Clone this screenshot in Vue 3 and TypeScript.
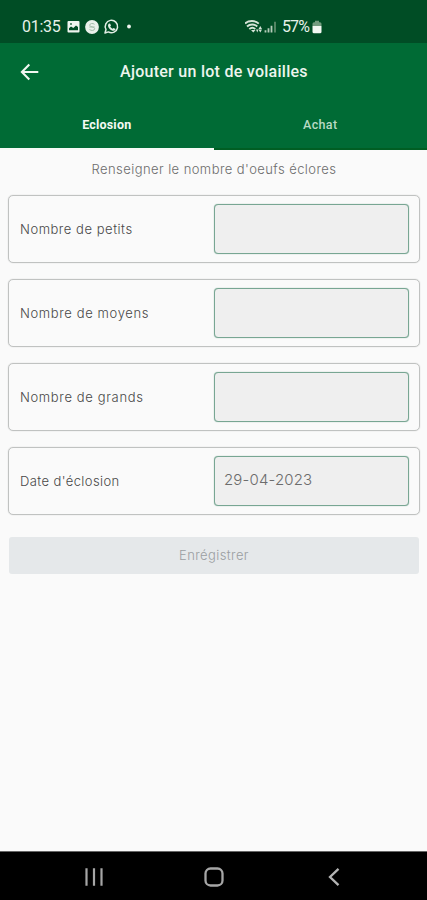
<script setup lang="ts">
import { ref } from 'vue'

interface Field {
  label: string
  value: string
  kind: string
}

const active = ref(0)
const tabs: string[] = ['Eclosion', 'Achat']
const fields = ref<Field[]>([
  { label: 'Nombre de petits', value: '', kind: 'petits' },
  { label: 'Nombre de moyens', value: '', kind: 'moyens' },
  { label: 'Nombre de grands', value: '', kind: 'grands' },
  { label: "Date d'éclosion", value: '29-04-2023', kind: 'date' },
])
</script>

<template>
  <div class="screen">
    <div class="status">
      <span class="time">01:35</span>
      <svg class="notifs" width="68" height="16" viewBox="0 0 68 16">
        <path fill="#eef5ee" fill-rule="evenodd" d="M1.500 2h10a1 1 0 0 1 1 1v9.500a1 1 0 0 1-1 1h-10a1 1 0 0 1-1-1V3a1 1 0 0 1 1-1zM2 11.300h9V8L9 6.500 6.300 9 4 7.600 2 9.300zM3.200 4.200v1.600h1.600V4.200z" />
        <circle cx="25" cy="8" r="6.900" fill="#e9f1ea" />
        <path d="M27.500 5.300c-1.500-1.400-4.800-1-4.800.9 0 2.100 5 1.300 5 3.500 0 2-3.500 2.300-5.200.8M22.300 8h5.400" fill="none" stroke="#a3bda9" stroke-width="1" />
        <path d="M38 14l1-3.500a6.200 6.200 0 1 1 2.400 2.400z" fill="none" stroke="#e2eee4" stroke-width="1.500" stroke-linejoin="round" />
        <path d="M41.700 4.700l1.300-.3 1 2.100-.8 1.100c.6 1.100 1.300 1.700 2.400 2.200l1-.9 2 1-.3 1.200c-1.600 1.500-4.100.4-5.600-1.200-1.500-1.600-2.400-3.700-1-5.200z" fill="#e2eee4" />
        <circle cx="62" cy="7.500" r="1.900" fill="#eef5ee" />
      </svg>
      <svg class="signals" width="34" height="16" viewBox="0 0 34 16">
        <g fill="none" stroke="#d5e4d8" stroke-width="1.900">
          <path d="M0 4.600c3.500-3.400 10.300-3.400 13.800 0" />
          <path d="M2 7.500c2.900-2.600 7.400-2.600 10.300 0" />
          <path d="M4.300 10.100c1.700-1.500 4.300-1.500 6 0" />
        </g>
        <path d="M6 11l2.300 2.600L10.500 11z" fill="#d5e4d8" />
        <path d="M11 10.500h2.500L12.250 13.500zM13.500 10h3.500l-1.700-3zM13.500 10.500H17L15.300 13.500z" fill="#d5e4d8" />
        <path d="M20.500 13.500v-2.200M23.500 13.500V9.300M26.500 13.500V6.700" stroke="#b5ccba" stroke-width="1.800" />
        <path d="M30 13.500V2.800" stroke="#638f70" stroke-width="1.700" />
      </svg>
      <span class="percent">57%</span>
      <svg class="battery" width="10" height="14" viewBox="0 0 10 14">
        <path d="M3 .7h4v1.600h1a1.500 1.500 0 0 1 1.500 1.500V6H.5V3.800A1.500 1.500 0 0 1 2 2.300h1z" fill="#739c7f" />
        <path d="M.5 6h9v5.800A1.500 1.500 0 0 1 8 13.300H2A1.500 1.500 0 0 1 .5 11.800z" fill="#f2f8f2" />
      </svg>
    </div>

    <header class="appbar">
      <svg class="back" width="20" height="18" viewBox="0 0 20 18">
        <path d="M18.300 9H2.200M9.300 1.500L1.900 9l7.400 7.500" fill="none" stroke="#f1f7f1" stroke-width="2.100" />
      </svg>
      <h1 class="title">Ajouter un lot de volailles</h1>
    </header>

    <nav class="tabs">
      <button v-for="(tab, i) in tabs" :key="tab" class="tab" :class="{ active: active === i }" @click="active = i">
        {{ tab }}
      </button>
    </nav>

    <main class="content">
      <p class="intro">Renseigner le nombre d'oeufs éclores</p>
      <label v-for="field in fields" :key="field.kind" class="card">
        <span class="label" :class="field.kind">{{ field.label }}</span>
        <input v-model="field.value" class="input" type="text" />
      </label>
      <button class="save" disabled>Enrégistrer</button>
    </main>

    <footer class="navbar">
      <svg width="18" height="20" viewBox="0 0 18 20">
        <path d="M1.500 1.300v17.400M9 1.300v17.400M16.500 1.300v17.400" stroke="#a6a6a6" stroke-width="2.200" />
      </svg>
      <svg class="home" width="20" height="20" viewBox="0 0 20 20">
        <rect x="1.500" y="1.500" width="17" height="17" rx="5" fill="none" stroke="#a6a6a6" stroke-width="2.300" />
      </svg>
      <svg width="12" height="20" viewBox="0 0 12 20">
        <path d="M10.500 1.800L2 10l8.500 8.200" fill="none" stroke="#b4b4b4" stroke-width="2.300" />
      </svg>
    </footer>
  </div>
</template>

<style>
body {
  margin: 0;
}
</style>

<style scoped>
.screen {
  width: 427px;
  height: 900px;
  display: flex;
  flex-direction: column;
  overflow: hidden;
  background: #fafafa;
  font-family: Inter, sans-serif;
}
svg {
  display: block;
  flex: none;
}
.status {
  height: 43px;
  flex: none;
  box-sizing: border-box;
  padding: 10px 0 0 22px;
  display: flex;
  align-items: center;
  background: #004d25;
  color: #e7f1e8;
  font: 400 16px/20px Roboto, sans-serif;
}
.time {
  width: 45px;
  letter-spacing: -0.3px;
}
.notifs {
  margin-top: 1px;
}
.signals {
  margin-left: 110px;
}
.percent {
  width: 28px;
  margin-left: 3px;
  letter-spacing: -0.9px;
}
.battery {
  margin-left: 2px;
  margin-top: 1px;
}
.appbar {
  height: 58px;
  flex: none;
  display: flex;
  align-items: center;
  background: #006b35;
}
.back {
  margin-left: 20px;
}
.title {
  margin: 0 0 0 80px;
  color: #edf5ee;
  font: 500 16px/20px Roboto, sans-serif;
  letter-spacing: 0.27px;
  white-space: nowrap;
}
.tabs {
  height: 49px;
  flex: none;
  display: flex;
  background: #006b35;
}
.tab {
  flex: 1;
  padding: 0;
  border: 0;
  border-bottom: 2px solid #005e23;
  background: none;
  color: #b9dac5;
  font: 500 12.500px/47px Roboto, sans-serif;
  letter-spacing: 0.35px;
}
.tab.active {
  border-bottom-color: #f5faf5;
  color: #f4faf4;
  font-weight: 700;
  letter-spacing: 0.2px;
}
.content {
  flex: 1;
  min-height: 0;
  padding: 10px 7px 0 8px;
}
.intro {
  margin: 0 0 15.500px;
  color: #6c6c6c;
  text-align: center;
  font-size: 13px;
  line-height: 19px;
  font-weight: 300;
  letter-spacing: 0.43px;
}
.card {
  height: 68px;
  margin-bottom: 16.100px;
  box-sizing: border-box;
  padding: 0 10px 0 11px;
  border: 1px solid #c0c2c1;
  border-radius: 5px;
  box-shadow: 0 0 1px #b5b8b6;
  display: flex;
  align-items: center;
  justify-content: space-between;
}
.label {
  color: #484848;
  font-size: 13px;
  line-height: 20px;
  font-weight: 300;
  letter-spacing: 0.4px;
}
.label.petits {
  letter-spacing: 0.53px;
}
.label.moyens {
  letter-spacing: 0.62px;
}
.label.grands {
  letter-spacing: 0.64px;
}
.input {
  width: 195px;
  height: 50px;
  box-sizing: border-box;
  padding: 0 9px 2px;
  border: 1px solid #78a693;
  border-radius: 4px;
  box-shadow: 0 0 1px #78a693;
  background: #efefef;
  color: #6c6c6c;
  font: 300 15px Inter, sans-serif;
  letter-spacing: 0.15px;
  outline: none;
}
.save {
  display: block;
  width: 410px;
  height: 37px;
  margin: 22px 0 0 1px;
  padding: 0;
  border: 0;
  border-radius: 3px;
  background: #e5e8ea;
  color: #9a9ea1;
  font: 300 13px Inter, sans-serif;
  letter-spacing: 0.4px;
}
.navbar {
  height: 49px;
  flex: none;
  box-sizing: border-box;
  padding: 2px 87px 0 85px;
  border-top: 1px solid #666;
  display: flex;
  align-items: center;
  justify-content: space-between;
  background: #000;
}
.home {
  margin-right: 4px;
}
</style>
